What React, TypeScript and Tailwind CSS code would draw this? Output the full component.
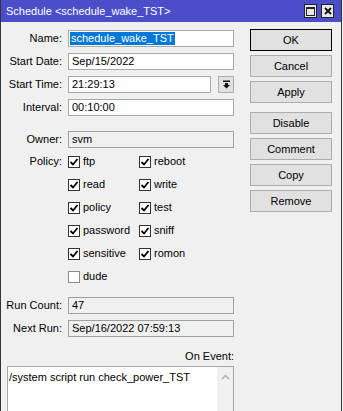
import { ReactNode } from 'react'

const font = { fontFamily: '"Liberation Sans", Arial, sans-serif' }

function Label({ children }: { children: ReactNode }) {
  return <div className="w-[62px] shrink-0 text-right pr-[1px]">{children}</div>
}

function Field({ label, value, disabled, selected }: { label: string; value: string; disabled?: boolean; selected?: boolean }) {
  return (
    <div className="flex items-center h-[17px] gap-[5px]">
      <Label>{label}</Label>
      <div
        className={`flex items-center w-[166px] h-[17px] border px-[1px] ${
          disabled ? 'bg-[#f0f0f0] border-[#a0a0a0]' : 'bg-white border-[#a8a8a8]'
        }`}
      >
        {selected ? (
          <span className="bg-[#0078d7] text-white h-[13px] leading-[13px] pl-[1px] pr-[1px]">{value}</span>
        ) : (
          <span className="pl-[2px]">{value}</span>
        )}
      </div>
    </div>
  )
}

function Check({ on, label }: { on: boolean; label: string }) {
  return (
    <div className="flex items-center gap-[3px]">
      <span
        className={`w-[12px] h-[12px] bg-white border flex items-center justify-center ${
          on ? 'border-[#333]' : 'border-[#8a8a8a]'
        }`}
      >
        {on && (
          <svg width="10" height="10" viewBox="0 0 10 10">
            <path d="M1.5 5 L4 7.5 L8.5 2" fill="none" stroke="#000" strokeWidth="1.8" />
          </svg>
        )}
      </span>
      <span>{label}</span>
    </div>
  )
}

function Btn({ children, def }: { children: ReactNode; def?: boolean }) {
  return (
    <div
      className={`w-[82px] h-[22px] flex items-center justify-center bg-[#e1e1e1] border ${
        def ? 'border-black' : 'border-[#adadad]'
      }`}
    >
      {children}
    </div>
  )
}

const policy: [string, boolean, string | null, boolean][] = [
  ['ftp', true, 'reboot', true],
  ['read', true, 'write', true],
  ['policy', true, 'test', true],
  ['password', true, 'sniff', true],
  ['sensitive', true, 'romon', true],
  ['dude', false, null, false],
]

export default function App() {
  return (
    <div className="w-[343px] h-[411px] overflow-hidden bg-[#f0f0f0] flex text-[11px] text-black" style={font}>
      <div className="w-[342px] h-[411px] border-l border-r border-[#333] flex flex-col">
        {/* Title bar */}
        <div className="h-[22px] shrink-0 bg-[#4b4ec8] flex items-center pl-[5px] pr-[7px]">
          <span className="text-white text-[11px] flex-1">Schedule &lt;schedule_wake_TST&gt;</span>
          <div className="flex gap-[4px]">
            <div className="w-[13px] h-[14px] bg-[#e8e8e8] border border-[#222] flex items-center justify-center">
              <div className="w-[9px] h-[9px] border border-[#222] border-t-2" />
            </div>
            <div className="w-[13px] h-[14px] bg-[#e8e8e8] border border-[#222] flex items-center justify-center">
              <svg width="8" height="8" viewBox="0 0 8 8">
                <path d="M1 1 L7 7 M7 1 L1 7" stroke="#111" strokeWidth="1.8" />
              </svg>
            </div>
          </div>
        </div>

        <div className="flex flex-1 min-h-0">
          {/* Left form */}
          <div className="w-[233px] shrink-0 flex flex-col pt-[8px]">
            <div className="flex flex-col gap-[6px]">
              <Field label="Name:" value="schedule_wake_TST" selected />
              <Field label="Start Date:" value="Sep/15/2022" />
              <div className="flex items-center h-[17px] gap-[5px]">
                <Label>Start Time:</Label>
                <div className="w-[148px] h-[17px] bg-white border border-[#a8a8a8] flex items-center pl-[3px]">21:29:13</div>
                <div className="ml-[2px] w-[16px] h-[17px] bg-[#e1e1e1] border border-[#adadad] flex items-center justify-center">
                  <svg width="9" height="9" viewBox="0 0 9 9">
                    <rect x="1" y="0.5" width="7" height="1.5" fill="#111" />
                    <path d="M3 3 H6 V5 H8 L4.5 8.5 L1 5 H3 Z" fill="#111" />
                  </svg>
                </div>
              </div>
              <Field label="Interval:" value="00:10:00" />
            </div>

            <div className="ml-[8px] mt-[7px] h-px bg-[#a0a0a0]" />

            <div className="mt-[8px]">
              <Field label="Owner:" value="svm" disabled />
            </div>

            <div className="flex mt-[2px]">
              <Label>
                <div className="h-[23px] flex items-center justify-end">Policy:</div>
              </Label>
              <div className="flex flex-col pl-[5px]">
                {policy.map(([a, aOn, b, bOn]) => (
                  <div key={a} className="h-[23px] flex items-center">
                    <div className="w-[71px]">
                      <Check on={aOn} label={a} />
                    </div>
                    {b && <Check on={bOn} label={b} />}
                  </div>
                ))}
              </div>
            </div>

            <div className="ml-[8px] mt-[3px] h-px bg-[#a0a0a0]" />

            <div className="flex flex-col gap-[6px] mt-[6px]">
              <Field label="Run Count:" value="47" disabled />
              <Field label="Next Run:" value="Sep/16/2022 07:59:13" disabled />
            </div>

            <div className="ml-[8px] mt-[7px] h-px bg-[#a0a0a0]" />

            <div className="mt-[5px] h-[14px] text-right leading-[14px]">On Event:</div>

            <div className="ml-[6px] mt-[3px] h-[60px] shrink-0 bg-white border border-[#a8a8a8] flex">
              <div className="flex-1 pl-[1px] pt-[2px]">/system script run check_power_TST</div>
              <div className="w-[16px] bg-[#f0f0f0] flex justify-center pt-[7px]">
                <svg width="9" height="6" viewBox="0 0 9 6">
                  <path d="M1 5 L4.5 1.5 L8 5" fill="none" stroke="#b0b0b0" strokeWidth="1.5" />
                </svg>
              </div>
            </div>
          </div>

          {/* Right buttons */}
          <div className="flex flex-col pt-[7px] pl-[16px]">
            <div className="flex flex-col gap-[4px]">
              <Btn def>OK</Btn>
              <Btn>Cancel</Btn>
              <Btn>Apply</Btn>
            </div>
            <div className="flex flex-col gap-[4px] mt-[9px]">
              <Btn>Disable</Btn>
              <Btn>Comment</Btn>
              <Btn>Copy</Btn>
              <Btn>Remove</Btn>
            </div>
          </div>
        </div>
      </div>
    </div>
  )
}
